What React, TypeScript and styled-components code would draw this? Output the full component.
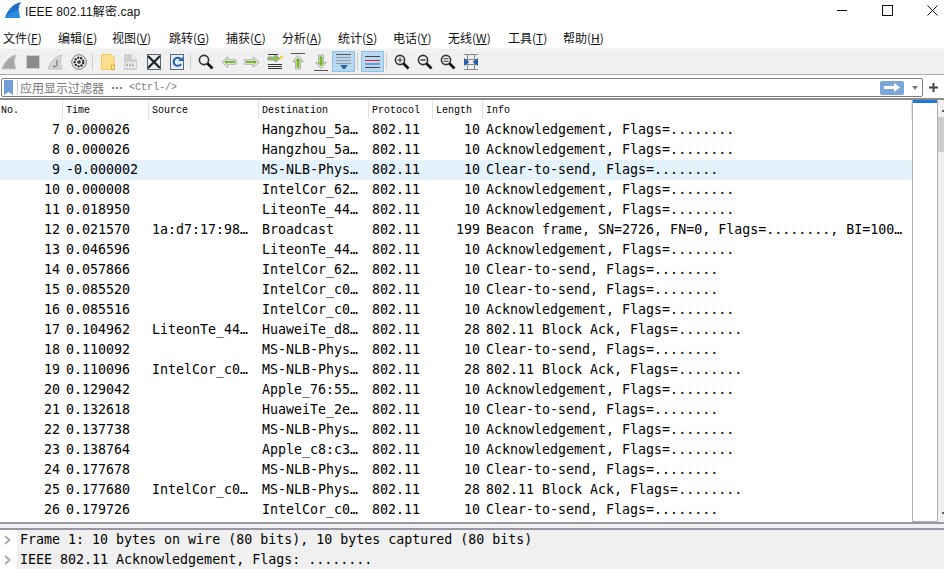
import React from "react";
import styled, { createGlobalStyle } from "styled-components";

const Global = createGlobalStyle`
  html, body { margin: 0; padding: 0; background: #fff; overflow: hidden; }
  #root { width: 944px; height: 575px; }
`;

const Win = styled.div`
  width: 944px; height: 575px; display: flex; flex-direction: column; background: #fff; overflow: hidden;
  font-family: "Noto Sans CJK SC", sans-serif;
`;
const TitleBar = styled.div`
  height: 22px; box-sizing: border-box; padding: 0 6px 2px 4px; display: flex; align-items: center; gap: 3px; flex: none;
`;
const Title = styled.div`
  font: 12px "Liberation Sans", "Noto Sans CJK SC", sans-serif; letter-spacing: 0.01em; color: #111; flex: 1;
`;
const WinButtons = styled.div`display: flex; align-items: center; gap: 34px;`;
const WinButton = styled.div`width: 11px; height: 11px; display: flex;`;
const MenuBar = styled.div`
  height: 20px; margin-top: 5px; display: flex; flex: none; align-items: center; padding-left: 3px;
  font: 12px "Noto Sans CJK SC", sans-serif; color: #111;
`;
const MenuItem = styled.span<{ $w: number }>`white-space: nowrap; flex: none; width: ${(p) => p.$w}px;`;
const U = styled.span`text-decoration: underline;`;
const Toolbar = styled.div`
  height: 25px; margin-top: 1px; flex: none; display: flex; align-items: center;
  background: #f0f0f0; border-top: 1px solid #f7f7f7; border-bottom: 1px solid #a9a9a9;
`;
const Tool = styled.div<{ $on?: boolean }>`
  width: 23px; height: 21px; flex: none; display: flex; align-items: center; justify-content: center; box-sizing: border-box;
  ${(p) => (p.$on ? "background:#b9d9f3;border:1px solid #8fc0e6;" : "")}
  &:first-child { margin-left: -2px; }
`;
const Sep = styled.div`width: 1px; height: 17px; margin: 0 3px 0 2px; background: #cfcfcf; flex: none;`;
const FilterRow = styled.div`
  height: 21px; flex: none; display: flex; align-items: center; margin-top: 2px; padding-left: 1px;
`;
const FilterBox = styled.div`
  flex: 1; display: flex; align-items: center; border: 1px solid #7d7d7d; border-radius: 2px; box-sizing: border-box;
  height: 19px; background: #fff;
`;
const BookMark = styled.div`
  width: 9px; height: 15px; margin-left: 2px; background: #6f9fd6; flex: none;
  clip-path: polygon(0 0, 100% 0, 100% 100%, 50% 80%, 0 100%);
`;
const FilterDivider = styled.div`width: 1px; height: 15px; margin: 0 2px 0 4px; background: #c8c8c8; flex: none;`;
const Placeholder = styled.div`
  flex: 1; display: flex; align-items: center; font: 12px "Noto Sans CJK SC", sans-serif; color: #777; white-space: pre;
`;
const Dots = styled.span`margin: 0 6px 0 7px; font-weight: 700; color: #666;`;
const Mono = styled.span`font: 10px "Liberation Mono", monospace;`;
const ApplyBtn = styled.div`
  width: 24px; height: 14px; border-radius: 2px; background: #7ba7d8; flex: none; display: flex; align-items: center; justify-content: center;
`;
const Drop = styled.div`
  width: 0; height: 0; margin: 0 4px 0 8px; border-left: 3px solid transparent; border-right: 3px solid transparent; border-top: 4px solid #777;
`;
const Plus = styled.div`width: 21px; flex: none; display: flex; justify-content: center; align-items: center;`;
const ListArea = styled.div`
  height: 426px; flex: none; display: flex; border-top: 2px solid #8c8c8c; box-sizing: border-box; border-bottom: 2px solid #9a96a3;
`;
const ListMain = styled.div`flex: 1; min-width: 0; overflow: hidden; display: flex; flex-direction: column;`;
const HeaderRow = styled.div`
  height: 20px; flex: none; display: grid; grid-template-columns: 63px 86px 110px 110px 64px 50px 1fr; align-items: start;
  font: 10px "Liberation Mono", monospace; color: #000;
`;
const HeadCell = styled.div<{ $first?: boolean }>`
  height: 19px; padding-top: 3px; line-height: 16px; padding-left: ${(p) => (p.$first ? 1 : 3)}px; box-sizing: border-box; white-space: nowrap; overflow: hidden;
  border-right: 1px solid #e3e3e3;
`;
const Row = styled.div<{ $sel?: boolean }>`
  height: 20px; flex: none; display: grid; grid-template-columns: 63px 86px 110px 110px 64px 50px 1fr; align-items: start;
  background: ${(p) => (p.$sel ? "#e4f2fc" : "#fff")};
  font: 13.3px/19px "DejaVu Sans Mono", monospace; color: #000; white-space: nowrap;
`;
const Cell = styled.div<{ $right?: boolean }>`
  overflow: hidden; padding-left: 3px; padding-right: 3px; box-sizing: border-box; height: 20px;
  text-align: ${(p) => (p.$right ? "right" : "left")};
`;
const MiniMap = styled.div`
  width: 26px; flex: none; border-left: 1px solid #b0b0b0; border-right: 1px solid #b0b0b0; border-bottom: 1px solid #b0b0b0; box-sizing: border-box;
`;
const MapMark = styled.div`height: 3px; background: #1a78d8;`;
const ScrollBar = styled.div`
  width: 6px; flex: none; background: #f0f0f0; display: flex; flex-direction: column; align-items: stretch; position: relative;
`;
const ScrollThumb = styled.div`height: 35px; margin-top: 17px; background: #cdcdcd;`;
const ScrollTick = styled.div<{ $bottom?: boolean }>`
  position: absolute; right: 0; width: 2px; height: 2px; background: #606060;
  ${(p) => (p.$bottom ? "bottom: 8px;" : "top: 10px;")}
`;
const GapStrip = styled.div`height: 4px; flex: none; background: #f0f0f0;`;
const Details = styled.div`
  flex: none; height: 39px; border-top: 2px solid #9a96a3; display: flex; flex-direction: column;
  background: #f0f0f0;
`;
const DetailRow = styled.div`
  height: 20px; flex: none; display: flex; align-items: flex-start; font: 13.3px/19px "DejaVu Sans Mono", monospace; color: #000; white-space: pre;
`;
const Chevron = styled.div`
  width: 17px; margin-right: 3px; flex: none; display: flex; padding-left: 4px; box-sizing: border-box; background: #fff; height: 100%; align-items: center;
`;

const rows: [string, string, string, string, string, string, string, boolean?][] = [
  ["7","0.000026","","Hangzhou_5a…","802.11","10","Acknowledgement, Flags=........"],
  ["8","0.000026","","Hangzhou_5a…","802.11","10","Acknowledgement, Flags=........"],
  ["9","-0.000002","","MS-NLB-Phys…","802.11","10","Clear-to-send, Flags=........",true],
  ["10","0.000008","","IntelCor_62…","802.11","10","Acknowledgement, Flags=........"],
  ["11","0.018950","","LiteonTe_44…","802.11","10","Acknowledgement, Flags=........"],
  ["12","0.021570","1a:d7:17:98…","Broadcast","802.11","199","Beacon frame, SN=2726, FN=0, Flags=........, BI=100…"],
  ["13","0.046596","","LiteonTe_44…","802.11","10","Acknowledgement, Flags=........"],
  ["14","0.057866","","IntelCor_62…","802.11","10","Clear-to-send, Flags=........"],
  ["15","0.085520","","IntelCor_c0…","802.11","10","Clear-to-send, Flags=........"],
  ["16","0.085516","","IntelCor_c0…","802.11","10","Acknowledgement, Flags=........"],
  ["17","0.104962","LiteonTe_44…","HuaweiTe_d8…","802.11","28","802.11 Block Ack, Flags=........"],
  ["18","0.110092","","MS-NLB-Phys…","802.11","10","Clear-to-send, Flags=........"],
  ["19","0.110096","IntelCor_c0…","MS-NLB-Phys…","802.11","28","802.11 Block Ack, Flags=........"],
  ["20","0.129042","","Apple_76:55…","802.11","10","Acknowledgement, Flags=........"],
  ["21","0.132618","","HuaweiTe_2e…","802.11","10","Clear-to-send, Flags=........"],
  ["22","0.137738","","MS-NLB-Phys…","802.11","10","Acknowledgement, Flags=........"],
  ["23","0.138764","","Apple_c8:c3…","802.11","10","Acknowledgement, Flags=........"],
  ["24","0.177678","","MS-NLB-Phys…","802.11","10","Clear-to-send, Flags=........"],
  ["25","0.177680","IntelCor_c0…","MS-NLB-Phys…","802.11","28","802.11 Block Ack, Flags=........"],
  ["26","0.179726","","IntelCor_c0…","802.11","10","Clear-to-send, Flags=........"],
];

const menus: [string, string, number][] = [
  ["文件","F",55],["编辑","E",54],["视图","V",57],["跳转","G",57],["捕获","C",56],["分析","A",56],
  ["统计","S",55],["电话","Y",55],["无线","W",60],["工具","T",55],["帮助","H",45],
];

const Glass = ({ sign }: { sign?: string }) => (
  <svg width="16" height="16" viewBox="0 0 16 16">
    <circle cx="6" cy="6" r="4.6" fill="#f2f2f2" stroke="#333" strokeWidth="1.6" />
    <path d="M9.5 9.5l5 5" stroke="#111" strokeWidth="2.6" />
    {sign === "+" && <path d="M3.5 6h5M6 3.5v5" stroke="#333" strokeWidth="1.1" />}
    {sign === "-" && <path d="M3.5 6h5" stroke="#333" strokeWidth="1.4" />}
    {sign === "=" && <path d="M3.5 4.8h5M3.5 7.2h5" stroke="#333" strokeWidth="1.1" />}
  </svg>
);
const ArrowH = ({ left }: { left?: boolean }) => (
  <svg width="16" height="12" viewBox="0 0 16 12" style={{ transform: left ? "none" : "scaleX(-1)" }}>
    <path d="M.8 6l6-5.2v3h8.4v4.4H6.8v3z" fill="#f2f2f2" stroke="#a8a8a8" />
    <path d="M3 6l3-2.5V5h8v2H6v1.5z" fill="#76b82a" />
  </svg>
);
const ArrowV = ({ up }: { up?: boolean }) => (
  <svg width="14" height="18" viewBox="0 0 14 18" style={{ transform: up ? "none" : "scaleY(-1)" }}>
    <path d="M0 .5h14" stroke="#555" />
    <path d="M7 2.5l5.2 6H9.4v7.5H4.6V8.5H1.8z" fill="#f2f2f2" stroke="#a8a8a8" />
    <path d="M7 4.5l3 3.5H8.4v6.8H5.6V8H4z" fill="#76b82a" />
  </svg>
);
const Icons = {
  shark: (
    <svg width="18" height="18" viewBox="0 0 18 18"><path d="M1 16C3 10 8 3 15 2c-2 4-2 9 0 14z" fill="#a6a6a6" stroke="#c8c8c8" /></svg>
  ),
  stop: (
    <svg width="16" height="16" viewBox="0 0 16 16"><rect x="1.5" y="1.5" width="13" height="13" fill="#8c8c8c" stroke="#cfcfcf" /></svg>
  ),
  restart: (
    <svg width="18" height="18" viewBox="0 0 18 18"><path d="M1 16C3 10 8 3 15 2c-2 4-2 9 0 14z" fill="#d6d6d6" stroke="#c0c0c0" /><path d="M10 7v5a2.5 2.5 0 0 1-4 1" fill="none" stroke="#8a8a8a" strokeWidth="1.6" /></svg>
  ),
  gear: (
    <svg width="16" height="16" viewBox="0 0 16 16"><circle cx="8" cy="8" r="7.3" fill="#eee" stroke="#777" /><circle cx="8" cy="8" r="4.3" fill="none" stroke="#222" strokeWidth="2.2" strokeDasharray="2 1" /><circle cx="8" cy="8" r="1.8" fill="#333" /></svg>
  ),
  open: (
    <svg width="14" height="16" viewBox="0 0 14 16"><path d="M.5.5h9l3.5 3v12H.5z" fill="#fde08e" stroke="#eec45c" /><path d="M10.500 11v4.500h3V11z" fill="#fde08e" stroke="#e0aa30" /></svg>
  ),
  file: (
    <svg width="15" height="16" viewBox="0 0 15 16"><path d="M1 0h8l5 5v11H1z" fill="#cfcfcf" /><path d="M9 0v5h5" fill="#eee" /><rect x="2" y="8" width="11" height="6" fill="#eee" /><path d="M4 9.500v3M7 9.500v3M10 9.500v3" stroke="#999" strokeWidth="1.3" /></svg>
  ),
  close: (
    <svg width="14" height="16" viewBox="0 0 14 16"><rect x=".5" y=".5" width="13" height="15" fill="#e4eef6" stroke="#5a6a75" /><path d="M1 2l12 12M13 2L1 14" stroke="#222" strokeWidth="2.2" /></svg>
  ),
  reload: (
    <svg width="14" height="16" viewBox="0 0 14 16"><rect x=".5" y=".5" width="13" height="15" fill="#e4eef6" stroke="#5a6a75" /><path d="M10.500 5a4 4 0 1 0 .5 5" fill="none" stroke="#1f5fb0" strokeWidth="2" /><path d="M8 7h5V3z" fill="#1f5fb0" /></svg>
  ),
  goto: (
    <svg width="16" height="15" viewBox="0 0 16 15"><path d="M1 10.500h14M1 12.500h14M1 14.500h14M1 .5h10" stroke="#333" /><path d="M1 3h7V1l5 3.500L8 8V6H1z" fill="#8cc63f" stroke="#999" /><rect x="13" y="2" width="3" height="3" fill="#f5d94a" /></svg>
  ),
  autoScroll: (
    <svg width="15" height="16" viewBox="0 0 15 16"><path d="M0 3.500h15M0 6.500h15M0 9.500h15" stroke="#9a9a9a" /><path d="M0 .5h15" stroke="#555" /><path d="M4 11h8l-1 1-2 3H7l-2-3z" fill="#2a62a8" /></svg>
  ),
  colorize: (
    <svg width="15" height="14" viewBox="0 0 15 14"><path d="M0 1.500h15" stroke="#444" /><path d="M0 5.500h15" stroke="#d02828" /><path d="M0 9h15" stroke="#2858b0" /><path d="M0 12.500h15" stroke="#444" /></svg>
  ),
  resize: (
    <svg width="14" height="16" viewBox="0 0 14 16"><path d="M0 .5h14M0 15.500h14M0 5.500h14M0 10.500h14M3.500 0v16M10.500 0v16" stroke="#888" fill="none" /><path d="M0 4l5.500 4L0 12zM14 4L8.500 8l5.500 4z" fill="#2a62a8" /></svg>
  ),
};

const Chev = () => (
  <svg width="7" height="10" viewBox="0 0 7 10"><path d="M1 1l4.500 4L1 9" fill="none" stroke="#a8a8a8" strokeWidth="1.8" /></svg>
);

export default function App() {
  return (
    <Win>
      <Global />
      <TitleBar>
        <svg width="18" height="18" viewBox="0 0 18 18"><path d="M1 17C3 10 8 3 17 1c-3 5-3 10-1 16z" fill="#1f6fc4" /><path d="M1 17c5-6 10-8 14-7l1 7z" fill="#2a8ce0" /></svg>
        <Title>IEEE 802.11解密.cap</Title>
        <WinButtons>
          <WinButton><svg width="11" height="11" viewBox="0 0 11 11"><path d="M0 5.500h10" stroke="#111" /></svg></WinButton>
          <WinButton><svg width="11" height="11" viewBox="0 0 11 11"><rect x=".5" y=".5" width="10" height="10" fill="none" stroke="#111" /></svg></WinButton>
          <WinButton><svg width="11" height="11" viewBox="0 0 11 11"><path d="M.5.5l10 10M10.500.5l-10 10" stroke="#111" /></svg></WinButton>
        </WinButtons>
      </TitleBar>
      <MenuBar>
        {menus.map(([n, k, w]) => (
          <MenuItem key={k} $w={w}>{n}(<U>{k}</U>)</MenuItem>
        ))}
      </MenuBar>
      <Toolbar>
        <Tool>{Icons.shark}</Tool>
        <Tool>{Icons.stop}</Tool>
        <Tool>{Icons.restart}</Tool>
        <Tool>{Icons.gear}</Tool>
        <Sep />
        <Tool>{Icons.open}</Tool>
        <Tool>{Icons.file}</Tool>
        <Tool>{Icons.close}</Tool>
        <Tool>{Icons.reload}</Tool>
        <Sep />
        <Tool><Glass /></Tool>
        <Tool><ArrowH left /></Tool>
        <Tool><ArrowH /></Tool>
        <Tool>{Icons.goto}</Tool>
        <Tool><ArrowV up /></Tool>
        <Tool><ArrowV /></Tool>
        <Tool $on>{Icons.autoScroll}</Tool>
        <Sep />
        <Tool $on>{Icons.colorize}</Tool>
        <Sep />
        <Tool><Glass sign="+" /></Tool>
        <Tool><Glass sign="-" /></Tool>
        <Tool><Glass sign="=" /></Tool>
        <Tool>{Icons.resize}</Tool>
      </Toolbar>
      <FilterRow>
        <FilterBox>
          <BookMark />
          <FilterDivider />
          <Placeholder>应用显示过滤器<Dots>⋯</Dots><Mono>&lt;Ctrl-/&gt;</Mono></Placeholder>
          <ApplyBtn><svg width="16" height="9" viewBox="0 0 16 9"><path d="M0 3h10V0l6 4.500L10 9V6H0z" fill="#fff" /></svg></ApplyBtn>
          <Drop />
        </FilterBox>
        <Plus><svg width="9" height="9" viewBox="0 0 9 9"><path d="M4.500 0v9M0 4.500h9" stroke="#444" strokeWidth="2" /></svg></Plus>
      </FilterRow>
      <ListArea>
        <ListMain>
          <HeaderRow>
            <HeadCell $first>No.</HeadCell>
            <HeadCell>Time</HeadCell>
            <HeadCell>Source</HeadCell>
            <HeadCell>Destination</HeadCell>
            <HeadCell>Protocol</HeadCell>
            <HeadCell>Length</HeadCell>
            <HeadCell>Info</HeadCell>
          </HeaderRow>
          {rows.map((r) => (
            <Row key={r[0]} $sel={!!r[7]}>
              <Cell $right>{r[0]}</Cell>
              <Cell>{r[1]}</Cell>
              <Cell>{r[2]}</Cell>
              <Cell>{r[3]}</Cell>
              <Cell>{r[4]}</Cell>
              <Cell $right>{r[5]}</Cell>
              <Cell>{r[6]}</Cell>
            </Row>
          ))}
        </ListMain>
        <MiniMap><MapMark /></MiniMap>
        <ScrollBar><ScrollTick /><ScrollThumb /><ScrollTick $bottom /></ScrollBar>
      </ListArea>
      <GapStrip />
      <Details>
        <DetailRow><Chevron><Chev /></Chevron><span>Frame 1: 10 bytes on wire (80 bits), 10 bytes captured (80 bits)</span></DetailRow>
        <DetailRow><Chevron><Chev /></Chevron><span>IEEE 802.11 Acknowledgement, Flags: ........</span></DetailRow>
      </Details>
    </Win>
  );
}
